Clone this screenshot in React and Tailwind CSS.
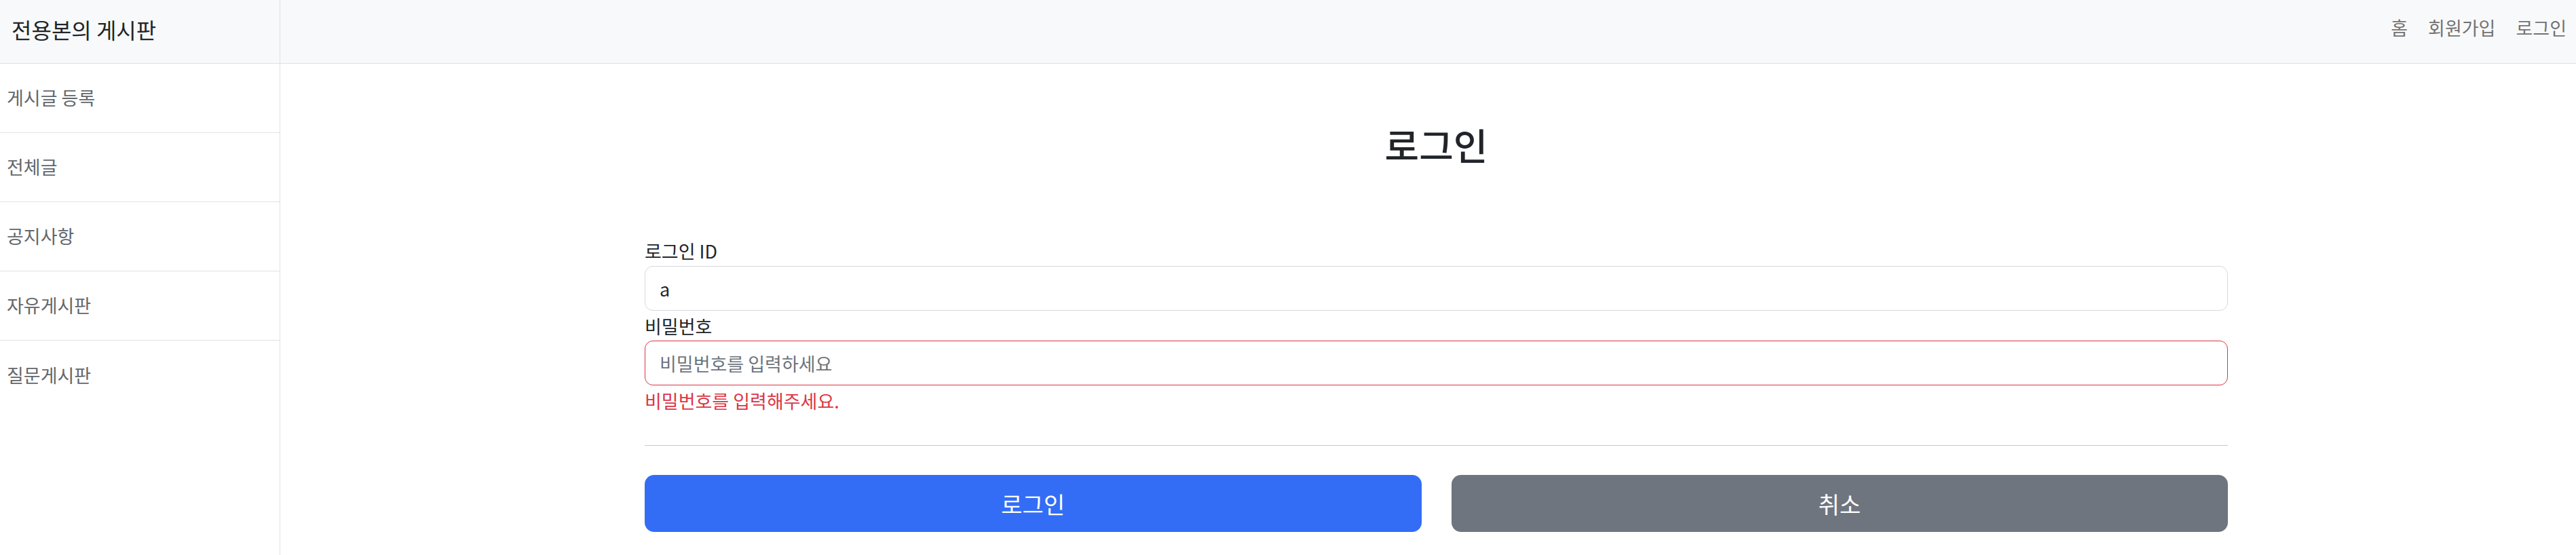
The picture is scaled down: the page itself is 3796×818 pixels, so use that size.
import { useState } from "react";

const menuItems = ["게시글 등록", "전체글", "공지사항", "자유게시판", "질문게시판"];

function App() {
  const [loginId, setLoginId] = useState("a");
  const [password, setPassword] = useState("");

  return (
    <div className="flex h-screen bg-white font-['Noto_Sans_CJK_KR','Noto_Sans',sans-serif] text-[#212529]">
      {/* sidebar */}
      <aside className="w-[413px] shrink-0 border-r border-[#dee2e6]">
        <div className="flex h-[94px] items-center border-b border-[#dee2e6] bg-[#f8f9fa] pb-[7px] pl-[17px]">
          <span className="text-[32px] leading-[44px] text-[#212529]">전용본의 게시판</span>
        </div>
        <ul>
          {menuItems.map((item, i) => (
            <li
              key={item}
              className={`flex h-[102px] items-center pl-[10px] text-[27px] text-[#63676c] ${
                i < menuItems.length - 1 ? "border-b border-[#dee2e6]" : ""
              }`}
            >
              {item}
            </li>
          ))}
        </ul>
      </aside>

      <div className="flex-1">
        {/* top nav */}
        <header className="flex h-[94px] items-center justify-end gap-[30px] border-b border-[#dee2e6] bg-[#f8f9fa] pb-[10px] pr-[14px] text-[27px] text-[#737373]">
          <a href="#">홈</a>
          <a href="#">회원가입</a>
          <a href="#">로그인</a>
        </header>

        <main className="pl-[537px] pr-[513px] pt-[89px]">
          <h2 className="text-center text-[55px] font-medium leading-[58px]">로그인</h2>

          <form className="mt-[111px]" onSubmit={(e) => e.preventDefault()}>
            <label htmlFor="loginId" className="mb-[4px] block text-[27px] leading-[36px]">
              로그인 ID
            </label>
            <input
              id="loginId"
              value={loginId}
              onChange={(e) => setLoginId(e.target.value)}
              className="block h-[66px] w-full rounded-[12px] border border-[#d5d9de] px-[21px] text-[27px] text-[#212529] outline-none"
            />

            <label htmlFor="password" className="mb-[3px] mt-[5px] block text-[27px] leading-[36px]">
              비밀번호
            </label>
            <input
              id="password"
              type="password"
              value={password}
              onChange={(e) => setPassword(e.target.value)}
              placeholder="비밀번호를 입력하세요"
              className="block h-[66px] w-full rounded-[12px] border border-[#dc3545] px-[21px] text-[27px] text-[#212529] outline-none placeholder:text-[#6c757d]"
            />
            <p className="mt-[5px] text-[27px] leading-[36px] text-[#dc3545]">비밀번호를 입력해주세요.</p>

            <hr className="mt-[47px] border-t border-[#c8c9ca]" />

            <div className="mt-[43px] grid grid-cols-2 gap-[44px]">
              <button type="submit" className="h-[84px] rounded-[14px] bg-[#336df5] text-[34px] text-white">
                로그인
              </button>
              <button type="button" className="h-[84px] rounded-[14px] bg-[#6f757e] text-[34px] text-white">
                취소
              </button>
            </div>
          </form>
        </main>
      </div>
    </div>
  );
}

export default App;
